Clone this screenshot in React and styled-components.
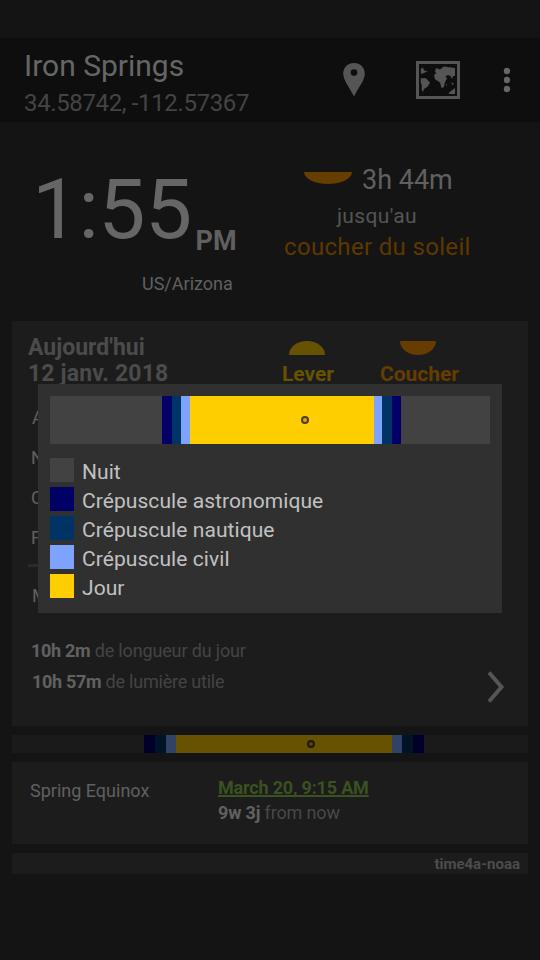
import React from "react";
import styled, { createGlobalStyle } from "styled-components";

const Global = createGlobalStyle`
  * { box-sizing: border-box; }
  body { margin: 0; background: #141414; font-family: Roboto, sans-serif; }
`;

const Screen = styled.main`
  position: relative;
  width: 540px;
  height: 960px;
  overflow: hidden;
  background: #141414;
  display: flex;
  flex-direction: column;
`;

const Line = styled.div`
  height: ${(p) => p.$h}px;
  line-height: ${(p) => p.$h}px;
  font-size: ${(p) => p.$size}px;
  font-weight: ${(p) => (p.$bold ? 700 : 400)};
  letter-spacing: ${(p) => p.$ls || 0}px;
  color: ${(p) => p.$color || "#606060"};
  margin-top: ${(p) => p.$mt || 0}px;
  margin-left: ${(p) => p.$ml || 0}px;
  white-space: nowrap;
`;

const Strong = styled.strong`
  font-weight: 700;
  color: #616161;
  letter-spacing: ${(p) => p.$ls || 0}px;
`;

const StatusBar = styled.div`
  height: 38px;
  flex: none;
`;

const Toolbar = styled.header`
  height: 84px;
  flex: none;
  background: #0e0e0e;
  padding: 10px 29px 0 24px;
  display: flex;
  justify-content: space-between;
`;

const Actions = styled.div`
  display: flex;
  align-items: flex-start;
  padding-top: 13px;
`;

const Hero = styled.section`
  height: 199px;
  flex: none;
  display: grid;
  grid-template-columns: 270px 270px;
`;

const Clock = styled.div`
  padding: 46px 0 0 32px;
`;

const ClockRow = styled.div`
  display: flex;
  height: 84px;
`;

const Next = styled.div`
  padding-top: 42px;
`;

const NextRow = styled.div`
  display: flex;
  padding-left: 34px;
`;

const Content = styled.div`
  display: flex;
  flex-direction: column;
  gap: 9px;
  padding: 0 12px;
`;

const Card = styled.section`
  background: #1c1c1c;
  height: ${(p) => p.$h}px;
  flex: none;
`;

const DayHead = styled.div`
  display: flex;
  height: 77px;
  padding: 14px 0 0 16px;
`;

const HeadDate = styled.div`
  width: 229px;
`;

const Column = styled.div`
  width: ${(p) => p.$w}px;
  padding-top: 6px;
  display: flex;
  flex-direction: column;
  align-items: center;
`;

const Rule = styled.div`
  height: 3px;
  margin: 6px 52px 0 16px;
  background: #2a2a2a;
`;

const Footer = styled.div`
  display: flex;
  justify-content: space-between;
`;

const Track = styled.div`
  position: relative;
  display: flex;
  height: ${(p) => p.$h}px;
  flex: none;
`;

const Segment = styled.div`
  width: ${(p) => p.$w}px;
  background: ${(p) => p.$c};
`;

const NowDot = styled.span`
  position: absolute;
  left: ${(p) => p.$x}px;
  top: 50%;
  width: 8px;
  height: 8px;
  margin: -4px 0 0 -4px;
  border-radius: 50%;
  border: 2px solid ${(p) => p.$ring};
  background: ${(p) => p.$fill};
`;

const Event = styled(Card)`
  display: flex;
  padding: 0 18px;
`;

const EventName = styled.div`
  width: 188px;
`;

const Source = styled(Card)`
  display: flex;
  justify-content: flex-end;
  padding-right: 8px;
`;

const Link = styled.a`
  color: #3a5120;
  text-decoration: underline;
  text-decoration-thickness: 2px;
  text-underline-offset: 1px;
  text-decoration-skip-ink: none;
`;

const Dialog = styled.div`
  position: absolute;
  left: 38px;
  top: 384px;
  width: 464px;
  height: 229px;
  padding: 12px;
  background: #303030;
`;

const Legend = styled.ul`
  list-style: none;
  margin: 14px 0 0;
  padding: 0;
  display: flex;
  flex-direction: column;
  gap: 5px;
`;

const LegendItem = styled.li`
  display: flex;
  height: 24px;
  gap: 8px;
`;

const Swatch = styled.span`
  width: 24px;
  height: 24px;
  background: ${(p) => p.$c};
`;

const Icon = styled.svg`
  display: block;
  flex: none;
  margin: ${(p) => p.$m || 0};
`;

const HalfSun = ({ w, h, color, up, m }) => (
  <Icon width={w} height={h} viewBox={`0 0 ${w} ${h}`} $m={m}>
    <ellipse cx={w / 2} cy={up ? h : 0} rx={w / 2} ry={h} fill={color} />
  </Icon>
);

const Timeline = ({ h, segments, x, ring, fill }) => (
  <Track $h={h}>
    {segments.map(([w, c], i) => (
      <Segment key={i} $w={w} $c={c} />
    ))}
    <NowDot $x={x} $ring={ring} $fill={fill} />
  </Track>
);

const dimSegments = [
  [132, "#1a1a1a"], [11, "#000028"], [11, "#001428"], [10, "#324166"], [216, "#665200"],
  [10, "#324166"], [11, "#001428"], [11, "#000028"], [104, "#1a1a1a"],
];
const brightSegments = [
  [112, "#424242"], [10, "#000066"], [9, "#003366"], [9, "#7da3ff"], [184, "#ffce00"],
  [8, "#7da3ff"], [10, "#003366"], [9, "#000066"], [89, "#424242"],
];
const legend = [
  ["Nuit", "#424242"],
  ["Crépuscule astronomique", "#000066"],
  ["Crépuscule nautique", "#003366"],
  ["Crépuscule civil", "#7da3ff"],
  ["Jour", "#ffce00"],
];

export default function App() {
  return (
    <Screen>
      <Global />
      <StatusBar />
      <Toolbar>
        <div>
          <Line $size={30} $h={36} $color="#666">Iron Springs</Line>
          <Line $size={24} $h={28} $mt={5} $ls={-0.36} $color="#444">34.58742, -112.57367</Line>
        </div>
        <Actions>
          <Icon width="22" height="35" viewBox="0 0 22 35" $m="0 51px 0 0">
            <path fillRule="evenodd" fill="#555" d="M11 2C4.600 2 0.200 6.700 0.200 12.500C0.200 19.500 7 27 11 35.500C15 27 21.800 19.500 21.800 12.500C21.800 6.700 17.400 2 11 2ZM11 8.300a3.300 3.300 0 1 1 0 6.600a3.300 3.300 0 0 1 0-6.600Z" />
          </Icon>
          <Icon width="44" height="38" viewBox="0 0 44 38" $m="0 43px 0 0">
            <rect x="1.500" y="1.500" width="41" height="35" fill="none" stroke="#555" strokeWidth="3" />
            <g fill="#555">
              <path d="M4.700 8L7 6.500L8 9.500L11.500 10.300L8 12L5 13Z" />
              <path d="M4.700 17.300H10L14 21.700L11.500 25.700L8 28L7 31L5.700 29V24L4.700 21.500Z" />
              <path d="M19 11L20 7L24 8.500L28 5.500L33 6.300L39 7V15H37L36.300 18L34.300 15L32 14L29.500 15.500L31 17.500L28.800 21.500L28 26L25.500 27L24 21.500L19 18.300L18 14L20.500 12Z" />
              <path d="M29.800 24L31 22.500L30.300 25.500ZM35.500 21L38 23L36 24Z" />
              <path d="M32.500 32L39 27V33H33.500Z" />
            </g>
          </Icon>
          <Icon width="8" height="26" viewBox="0 0 8 26" $m="6px 0 0 0">
            <circle cx="4" cy="4" r="3.200" fill="#666" />
            <circle cx="4" cy="13" r="3.200" fill="#666" />
            <circle cx="4" cy="22" r="3.200" fill="#666" />
          </Icon>
        </Actions>
      </Toolbar>
      <Hero>
        <Clock>
          <ClockRow>
            <Line $size={84} $h={84} $ls={-0.6} $color="#666">1:55</Line>
            <Line $size={27} $h={32} $mt={57} $ml={4} $bold>PM</Line>
          </ClockRow>
          <Line $size={18} $h={22} $mt={21} $ml={110}>US/Arizona</Line>
        </Clock>
        <Next>
          <NextRow>
            <HalfSun w={48} h={12} color="#663f00" m="8px 10px 0 0" />
            <Line $size={27} $h={32}>3h 44m</Line>
          </NextRow>
          <Line $size={21} $h={24} $mt={8} $ml={67} $ls={0.35} $color="#555">jusqu'au</Line>
          <Line $size={24} $h={30} $mt={4} $ml={14} $ls={0.33} $color="#5d3900">coucher du soleil</Line>
        </Next>
      </Hero>
      <Content>
        <Card $h={405}>
          <DayHead>
            <HeadDate>
              <Line $size={23} $h={26} $bold $color="#4b4b4b">Aujourd'hui</Line>
              <Line $size={23} $h={26} $ls={0.15} $bold $color="#4b4b4b">12 janv. 2018</Line>
            </HeadDate>
            <Column $w={101}>
              <HalfSun w={36} h={14} color="#665200" up m="0 2px 0 0" />
              <Line $size={21} $h={26} $mt={6} $ml={1} $bold $color="#665200">Lever</Line>
            </Column>
            <Column $w={122}>
              <HalfSun w={36} h={14} color="#663c00" m="0 3px 0 0" />
              <Line $size={21} $h={26} $mt={6} $ml={1} $bold $color="#663c00">Coucher</Line>
            </Column>
          </DayHead>
          <Line $size={18} $h={40} $ml={20}>A</Line>
          <Line $size={18} $h={40} $ml={19}>N</Line>
          <Line $size={18} $h={40} $ml={19}>C</Line>
          <Line $size={18} $h={40} $ml={19}>F</Line>
          <Rule />
          <Line $size={18} $h={40} $mt={9} $ml={20}>M</Line>
          <Footer>
            <div>
              <Line $size={18} $h={24} $mt={23} $ml={19} $ls={-0.15} $color="#444"><Strong $ls={-0.3}>10h 2m</Strong> de longueur du jour</Line>
              <Line $size={18} $h={24} $mt={7} $ml={20} $ls={-0.22} $color="#444"><Strong $ls={-0.3}>10h 57m</Strong> de lumière utile</Line>
            </div>
            <Icon width="20" height="34" viewBox="0 0 20 34" $m="54px 22px 0 0">
              <path d="M3 2.500L15.500 17L3 31.500" fill="none" stroke="#555" strokeWidth="4" />
            </Icon>
          </Footer>
        </Card>
        <Timeline h={18} segments={dimSegments} x={299} ring="#1a1a1a" fill="#663c00" />
        <Event $h={82}>
          <EventName>
            <Line $size={18} $h={24} $mt={17}>Spring Equinox</Line>
          </EventName>
          <div>
            <Line $size={18} $h={24} $mt={14} $ls={-0.18} $bold><Link>March 20, 9:15 AM</Link></Line>
            <Line $size={18} $h={24} $mt={1} $ls={-0.15} $color="#484848"><Strong $ls={-0.15}>9w 3j</Strong> from now</Line>
          </div>
        </Event>
        <Source $h={21}>
          <Line $size={15} $h={21} $mt={1} $bold $color="#4c4c4c">time4a-noaa</Line>
        </Source>
      </Content>
      <Dialog>
        <Timeline h={48} segments={brightSegments} x={255} ring="#424242" fill="#ff9800" />
        <Legend>
          {legend.map(([name, c]) => (
            <LegendItem key={name}>
              <Swatch $c={c} />
              <Line $size={21} $h={28} $ls={0.07} $color="#c1c1c1">{name}</Line>
            </LegendItem>
          ))}
        </Legend>
      </Dialog>
    </Screen>
  );
}
